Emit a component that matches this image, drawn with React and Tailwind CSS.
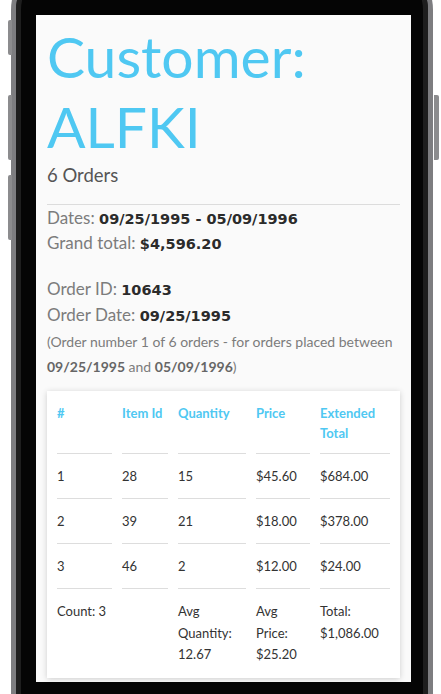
import React from "react";

const rows = [
  { n: "1", item: "28", qty: "15", price: "$45.60", ext: "$684.00" },
  { n: "2", item: "39", qty: "21", price: "$18.00", ext: "$378.00" },
  { n: "3", item: "46", qty: "2", price: "$12.00", ext: "$24.00" },
];

function Label({ children }) {
  return <span className="text-[#7c7c7c]">{children}</span>;
}
function Val({ children }) {
  return (
    <span className="font-['DejaVu_Sans',sans-serif] font-bold text-[#2b2b2b] text-[14.5px] leading-[16px]">
      {children}
    </span>
  );
}

export default function App() {
  return (
    <div className="relative w-[441px] h-[694px] overflow-hidden bg-white font-['Lato','Noto_Sans',sans-serif]">
      {/* side buttons */}
      <div className="absolute left-[8px] top-[20px] w-[4px] h-[35px] rounded-l-[2px] bg-[#8c8c8e]" />
      <div className="absolute left-[8px] top-[95px] w-[4px] h-[65px] rounded-l-[2px] bg-[#8c8c8e]" />
      <div className="absolute left-[8px] top-[175px] w-[4px] h-[65px] rounded-l-[2px] bg-[#8c8c8e]" />
      <div className="absolute left-[434px] top-[95px] w-[5px] h-[65px] rounded-r-[2px] bg-[#8c8c8e]" />

      <div className="ml-[11px] mt-[-40px] w-[422px] h-[820px] rounded-[50px] border-[5px] border-[#7d7d80] bg-[#1e1e1e]">
        <div className="h-full rounded-[45px] border-[5px] border-[#1e1e1e] bg-[#050505] pl-[15px] pr-[11px] pt-[45px]">
          <div className="w-[375px] h-[667px] bg-[#fafafa] border-t-[5px] border-white px-[11px]">
            <h1 className="text-[#4fc8f2] text-[57px] leading-[70px] font-normal pt-[1px]">
              Customer:
              <br />
              ALFKI
            </h1>
            <div className="text-[18.5px] text-[#555] leading-[26px] mt-[1px]">6 Orders</div>
            <div className="border-t border-[#dcdcdc] mt-[16px]" />
            <div className="text-[17px] leading-[25px]">
              <div>
                <Label>Dates:</Label> <Val>09/25/1995 - 05/09/1996</Val>
              </div>
              <div>
                <Label>Grand total:</Label> <Val>$4,596.20</Val>
              </div>
            </div>
            <div className="text-[17px] leading-[26px] mt-[21px]">
              <div>
                <Label>Order ID:</Label> <Val>10643</Val>
              </div>
              <div>
                <Label>Order Date:</Label> <Val>09/25/1995</Val>
              </div>
            </div>
            <div className="text-[14px] leading-[25px] text-[#7c7c7c] mt-[1px]">
              (Order number 1 of 6 orders - for orders placed between{" "}
              <span className="font-bold text-[#666]">09/25/1995</span> and{" "}
              <span className="font-bold text-[#666]">05/09/1996</span>)
            </div>

            <div className="mt-[12px] bg-white shadow-[0_1px_6px_rgba(0,0,0,0.18)]">
              <table className="w-full border-separate border-spacing-x-[10px] border-spacing-y-0 text-[13px] text-[#333]">
                <thead>
                  <tr className="text-left text-[#4fc8f2] font-bold align-top">
                    <th className="w-[55px] pt-[12px] pb-[10px] leading-[20px] border-b border-[#dddddd]">#</th>
                    <th className="w-[46px] pt-[12px] pb-[10px] leading-[20px] border-b border-[#dddddd]">Item Id</th>
                    <th className="w-[68px] pt-[12px] pb-[10px] leading-[20px] border-b border-[#dddddd]">Quantity</th>
                    <th className="w-[54px] pt-[12px] pb-[10px] leading-[20px] border-b border-[#dddddd]">Price</th>
                    <th className="pt-[12px] pb-[10px] leading-[20px] border-b border-[#dddddd]">
                      Extended
                      <br />
                      Total
                    </th>
                  </tr>
                </thead>
                <tbody>
                  {rows.map((r) => (
                    <tr key={r.n}>
                      <td className="py-[12px] leading-[20px] border-b border-[#dddddd]">{r.n}</td>
                      <td className="py-[12px] leading-[20px] border-b border-[#dddddd]">{r.item}</td>
                      <td className="py-[12px] leading-[20px] border-b border-[#dddddd]">{r.qty}</td>
                      <td className="py-[12px] leading-[20px] border-b border-[#dddddd]">{r.price}</td>
                      <td className="py-[12px] leading-[20px] border-b border-[#dddddd]">{r.ext}</td>
                    </tr>
                  ))}
                  <tr className="align-top">
                    <td className="pt-[12px] pb-[12px] leading-[21.5px]">Count: 3</td>
                    <td className="pt-[12px] pb-[12px] leading-[21.5px]"></td>
                    <td className="pt-[12px] pb-[12px] leading-[21.5px]">
                      Avg
                      <br />
                      Quantity:
                      <br />
                      12.67
                    </td>
                    <td className="pt-[12px] pb-[12px] leading-[21.5px]">
                      Avg
                      <br />
                      Price:
                      <br />
                      $25.20
                    </td>
                    <td className="pt-[12px] pb-[12px] leading-[21.5px]">
                      Total:
                      <br />
                      $1,086.00
                    </td>
                  </tr>
                </tbody>
              </table>
            </div>
          </div>
        </div>
      </div>
    </div>
  );
}
